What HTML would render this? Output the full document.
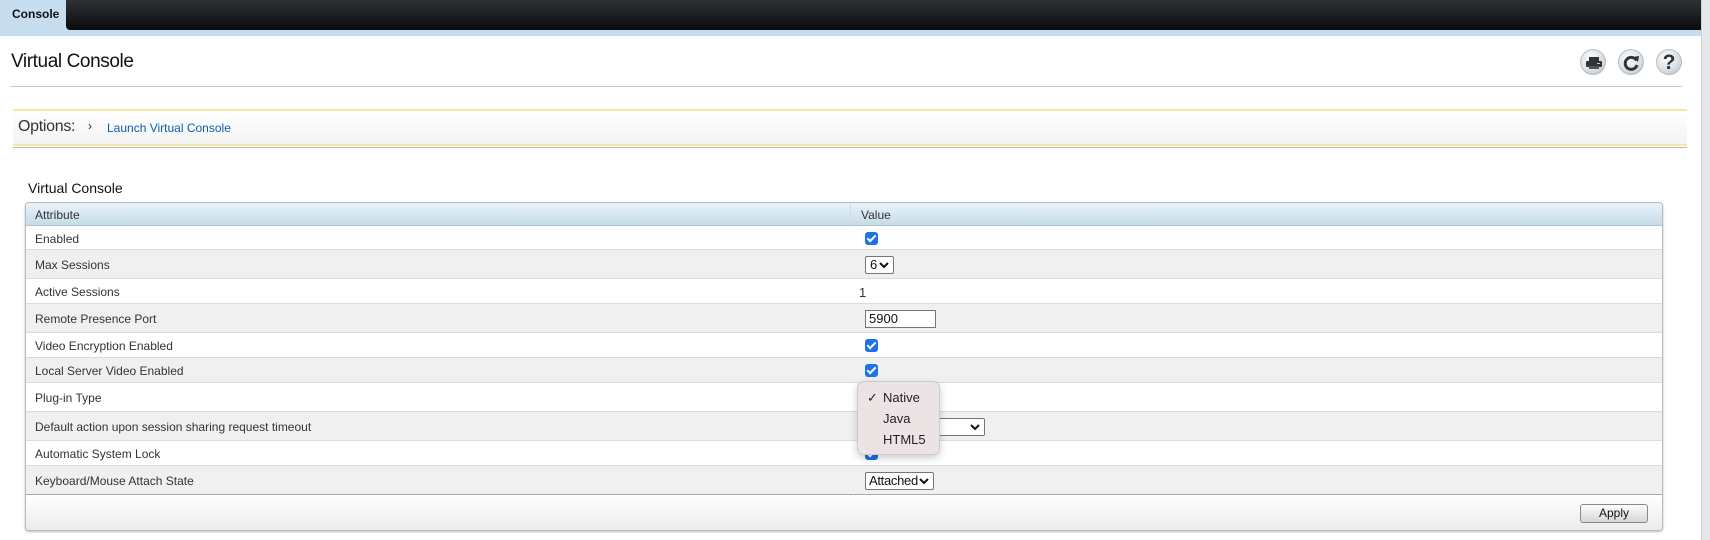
<!DOCTYPE html>
<html><head><style>
*{margin:0;padding:0;box-sizing:border-box}
body{width:1710px;height:540px;position:relative;overflow:hidden;background:#fff;font-family:"Liberation Sans",Arial,sans-serif;color:#333}
.a{position:absolute}
.topbar{left:0;top:0;width:1702px;height:36px;background:#c6ddf0}
.dark{left:66px;top:0;width:1636px;height:30px;background:linear-gradient(#2e3136,#0a0b0d);border-bottom-left-radius:4px}
.tab{left:12px;top:7px;font-size:12px;font-weight:bold;color:#111}
.sb{left:1701px;top:0;width:9px;height:540px;background:#e6e7ea;border-left:1px solid #d0d0d0}
.icon{width:26px;height:26px;border-radius:50%;background:radial-gradient(circle at 40% 35%,#fff,#d6dde2 60%,#aab4bb);border:1px solid #b8c0c6}
.row{left:26px;width:1636px;border-bottom:1px solid #dcdcdc;font-size:12px}
.row span{position:absolute;left:9px}
.cb{position:absolute;left:839px;width:13px;height:13px;background:#1a73e8;border-radius:3px}
.cb:after{content:"";position:absolute;left:4px;top:1px;width:3px;height:7px;border:solid #fff;border-width:0 2px 2px 0;transform:rotate(45deg)}
.sel{position:absolute;border:1px solid #767676;background:#fff;font-size:13px;color:#111;border-radius:2px;white-space:nowrap;line-height:16px}
.sel svg{position:absolute;right:4px;top:5px}
</style></head><body>
<div class="a topbar"></div>
<div class="a dark"></div>
<div class="a tab">Console</div>
<div class="a sb"></div>
<div class="a" style="left:11px;top:51px;font-size:19px;color:#111;letter-spacing:-0.4px">Virtual Console</div>
<div class="a" style="left:10px;top:86px;width:1672px;height:1px;background:#c8c8c8"></div>
<div class="a icon" style="left:1580px;top:49px"><svg width="26" height="26" viewBox="0 0 26 26"><rect x="8" y="7" width="10" height="4" fill="#333"/><rect x="5" y="11" width="16" height="6" rx="1" fill="#333"/><rect x="8" y="16" width="10" height="3" fill="#555"/><rect x="16" y="13" width="3" height="1" fill="#ccc"/></svg></div>
<div class="a icon" style="left:1618px;top:49px"><svg width="26" height="26" viewBox="0 0 26 26"><path d="M17.5 10.5A6 6 0 1 0 18 15" fill="none" stroke="#333" stroke-width="3"/><path d="M14 7l6-1-1 6z" fill="#333"/></svg></div>
<div class="a icon" style="left:1656px;top:49px;text-align:center;font-size:21px;font-weight:bold;line-height:26px;color:#333">?</div>
<div class="a" style="left:13px;top:109px;width:1674px;height:37px;background:linear-gradient(#fff,#f3f3f3);border-top:2px solid #fbe3a0;border-bottom:2px solid #fbe3a0"></div>
<div class="a" style="left:13px;top:147px;width:1674px;height:1px;background:#bbb"></div>
<div class="a" style="left:18px;top:118px;font-size:16px;color:#333;letter-spacing:-0.3px">Options:</div>
<div class="a" style="left:88px;top:119px;font-size:12px;color:#124">›</div>
<div class="a" style="left:107px;top:121px;font-size:12px;color:#0a5fb0">Launch Virtual Console</div>
<div class="a" style="left:28px;top:180px;font-size:14px;color:#111">Virtual Console</div>
<div class="a" style="left:25px;top:202px;width:1638px;height:329px;border:1px solid #b5bcc2;border-radius:4px;box-shadow:0 1px 2px #bbb;background:#fff"></div>
<div class="a" style="left:26px;top:203px;width:1636px;height:23px;background:linear-gradient(#e8f3fb,#c6dbe8);border-bottom:1px solid #a9c0cf;border-radius:3px 3px 0 0;font-size:12px"><span class="a" style="left:9px;top:5px">Attribute</span><span class="a" style="left:835px;top:5px">Value</span></div>
<div class="a" style="left:850px;top:203px;width:1px;height:293px;background:#d8d8d8"></div>
<div class="a row" style="top:226px;height:24px;background:#fff"><span style="top:6px">Enabled</span><i class="cb" style="top:6px"></i></div>
<div class="a row" style="top:250px;height:29px;background:#f0f0f0"><span style="top:8px">Max Sessions</span><div class="sel" style="left:839px;top:6px;width:29px;height:18px;padding:0 4px">6<svg width="10" height="7" viewBox="0 0 10 7"><path d="M1 1l4 4 4-4" fill="none" stroke="#111" stroke-width="2"/></svg></div></div>
<div class="a row" style="top:279px;height:25px;background:#fff"><span style="top:6px">Active Sessions</span><span style="left:833px;top:6px;font-size:13px">1</span></div>
<div class="a row" style="top:304px;height:29px;background:#f0f0f0"><span style="top:8px">Remote Presence Port</span><div class="sel" style="left:839px;top:6px;width:71px;height:18px;padding:0 3px;border-radius:0">5900</div></div>
<div class="a row" style="top:333px;height:25px;background:#fff"><span style="top:6px">Video Encryption Enabled</span><i class="cb" style="top:6px"></i></div>
<div class="a row" style="top:358px;height:25px;background:#f0f0f0"><span style="top:6px">Local Server Video Enabled</span><i class="cb" style="top:6px"></i></div>
<div class="a row" style="top:383px;height:29px;background:#fff"><span style="top:8px">Plug-in Type</span></div>
<div class="a row" style="top:412px;height:29px;background:#f0f0f0"><span style="top:8px">Default action upon session sharing request timeout</span><div class="sel" style="left:839px;top:6px;width:120px;height:18px"><svg width="10" height="7" viewBox="0 0 10 7"><path d="M1 1l4 4 4-4" fill="none" stroke="#111" stroke-width="2"/></svg></div></div>
<div class="a row" style="top:441px;height:25px;background:#fff"><span style="top:6px">Automatic System Lock</span><i class="cb" style="top:6px"></i></div>
<div class="a row" style="top:466px;height:29px;background:#f0f0f0;border-bottom:1px solid #aaa"><span style="top:8px">Keyboard/Mouse Attach State</span><div class="sel" style="left:839px;top:6px;width:69px;height:18px;padding:0 3px;letter-spacing:-0.3px">Attached<svg width="10" height="7" viewBox="0 0 10 7"><path d="M1 1l4 4 4-4" fill="none" stroke="#111" stroke-width="2"/></svg></div></div>
<div class="a" style="left:26px;top:496px;width:1636px;height:34px;background:linear-gradient(#fff,#ececec);border-radius:0 0 3px 3px"></div>
<div class="a" style="left:1580px;top:504px;width:68px;height:19px;border:1px solid #888;border-radius:3px;background:linear-gradient(#fdfdfd,#d6d6d6);font-size:12px;text-align:center;line-height:17px;color:#111">Apply</div>
<div class="a" style="left:857px;top:381px;width:83px;height:74px;background:#ece4e4;border:1px solid #ccc;border-radius:7px;box-shadow:0 3px 8px rgba(0,0,0,.2);font-size:13px;color:#222">
<div class="a" style="left:9px;top:8px">✓</div>
<div class="a" style="left:25px;top:8px">Native</div>
<div class="a" style="left:25px;top:29px">Java</div>
<div class="a" style="left:25px;top:50px">HTML5</div>
</div>
</body></html>
